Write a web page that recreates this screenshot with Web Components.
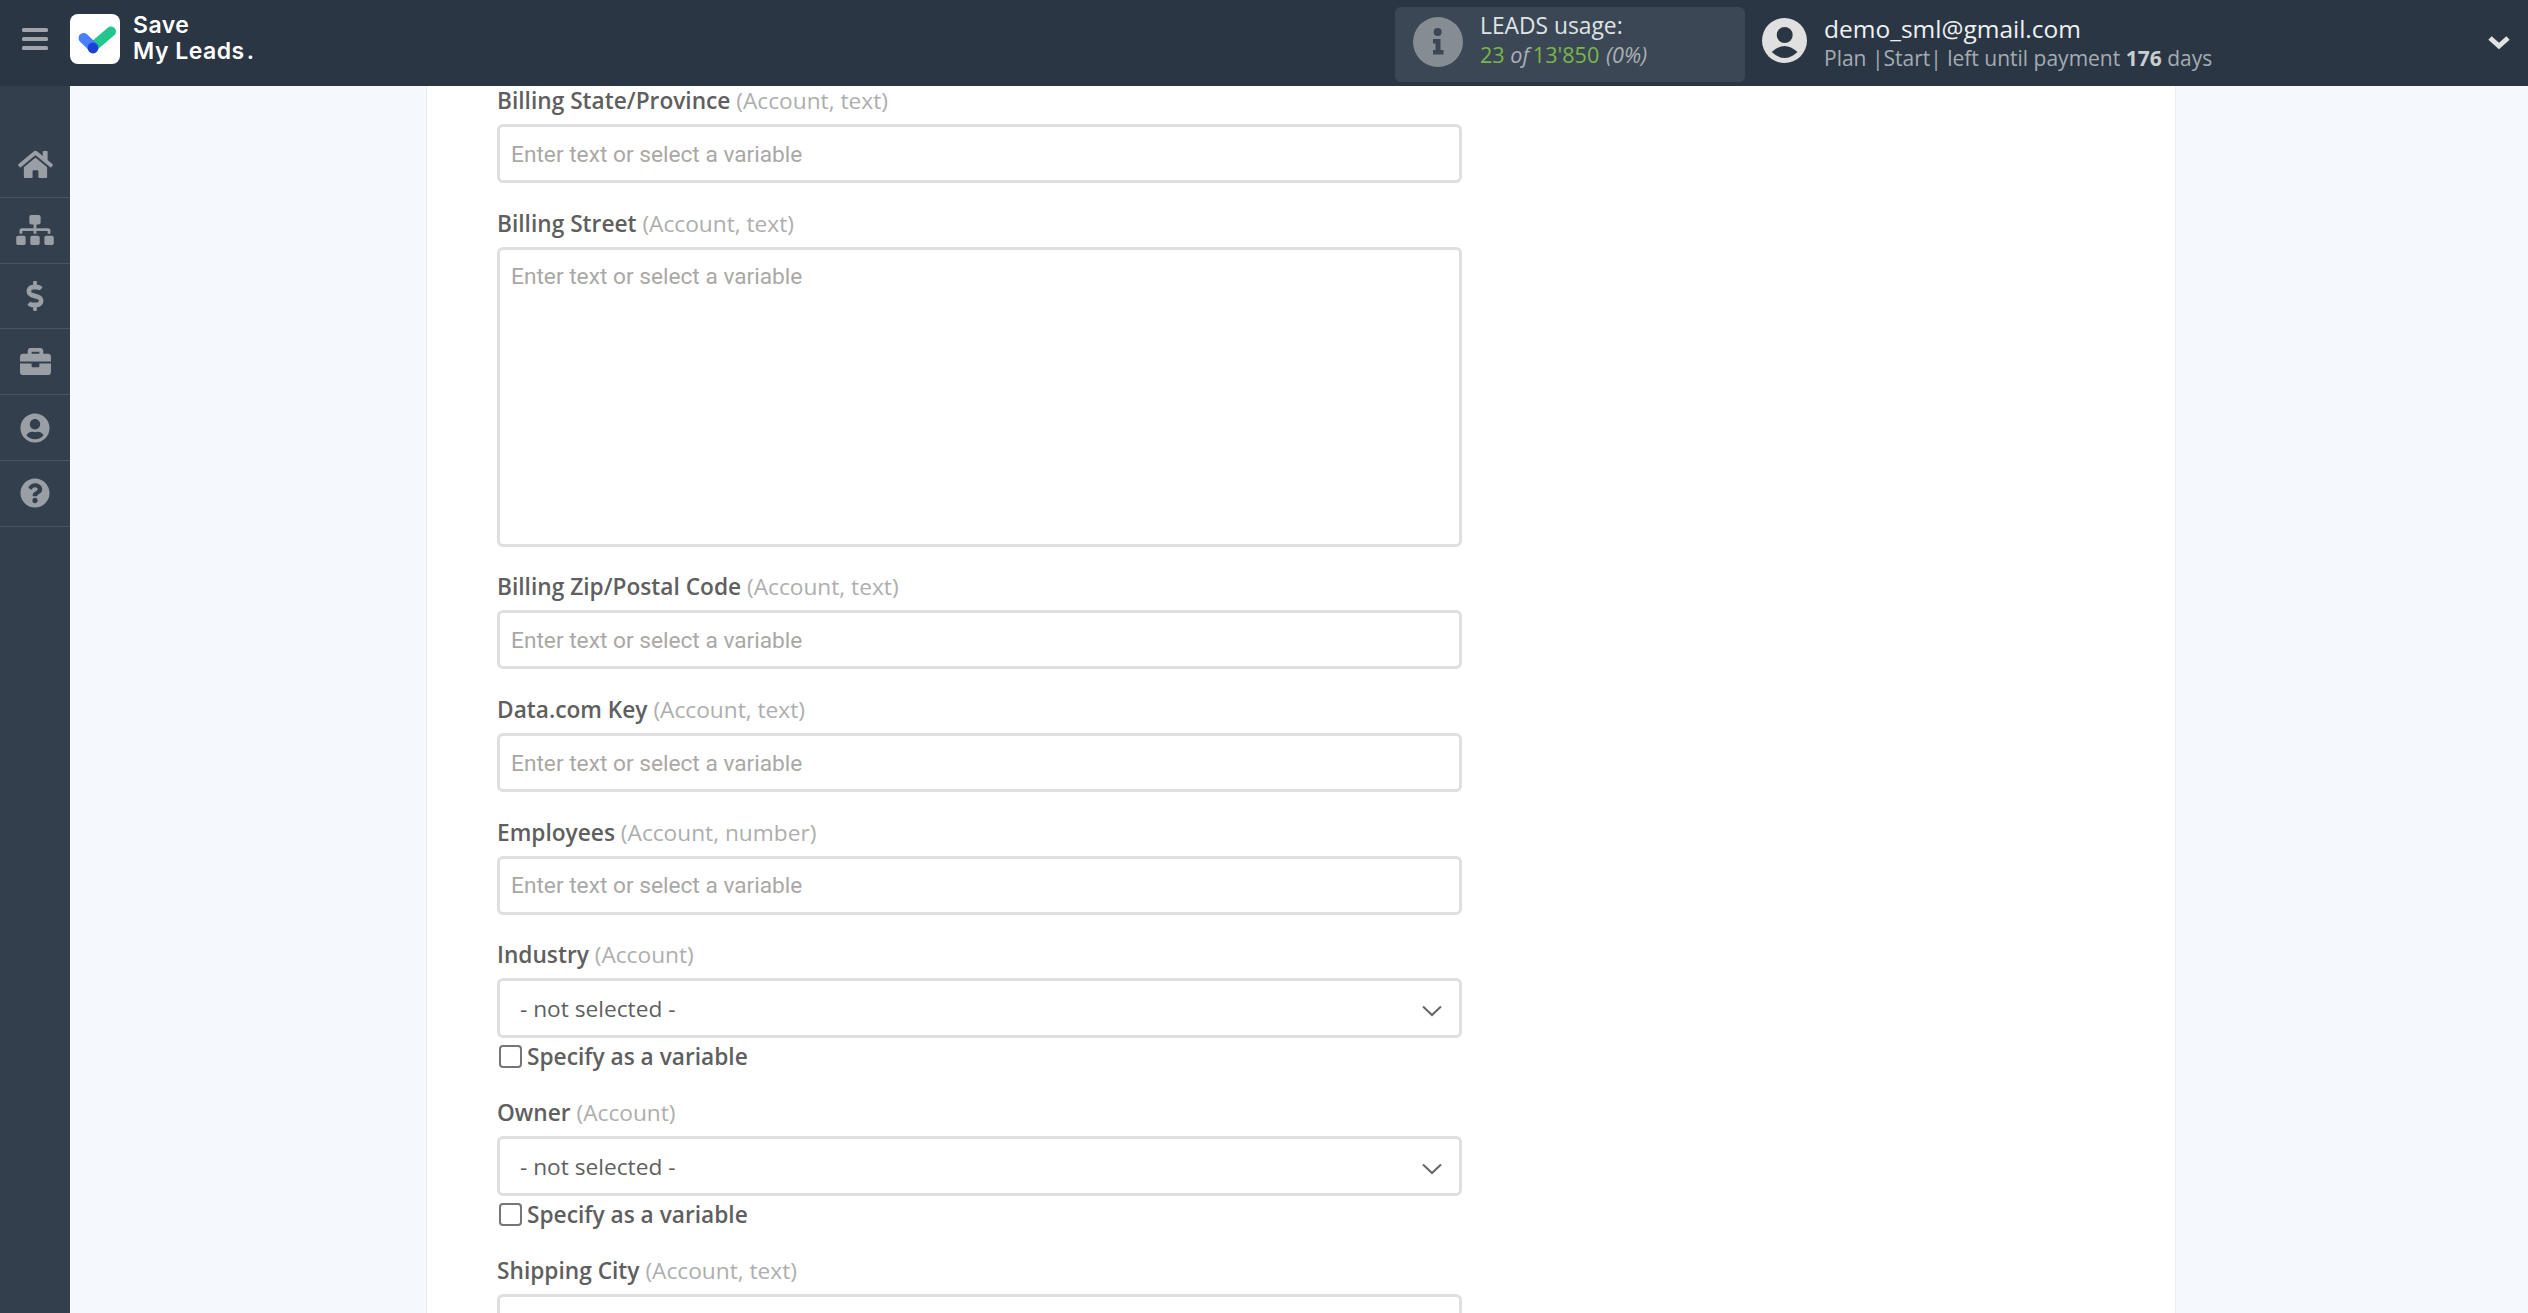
<!DOCTYPE html>
<html lang="en">
<head>
<meta charset="utf-8">
<title>Save My Leads</title>
<style>
  html, body { margin: 0; height: 100%; overflow: hidden; background: #f5f8fd; }
  body { display: flex; flex-direction: column; height: 1313px; font-family: "Open Sans", sans-serif; }
  .below { flex: 1; display: flex; min-height: 0; }
</style>
</head>
<body>
<sml-topbar></sml-topbar>
<div class="below">
  <sml-sidebar></sml-sidebar>
  <sml-content>
    <sml-field label="Billing State/Province" hint="(Account, text)"></sml-field>
    <sml-field label="Billing Street" hint="(Account, text)" type="area"></sml-field>
    <sml-field label="Billing Zip/Postal Code" hint="(Account, text)"></sml-field>
    <sml-field label="Data.com Key" hint="(Account, text)"></sml-field>
    <sml-field label="Employees" hint="(Account, number)"></sml-field>
    <sml-field label="Industry" hint="(Account)" type="select"></sml-field>
    <sml-field label="Owner" hint="(Account)" type="select"></sml-field>
    <sml-field label="Shipping City" hint="(Account, text)"></sml-field>
  </sml-content>
</div>

<template id="topbarTemplate">
  <style>
    :host { display: flex; align-items: center; height: 86px; flex: none; background: #2b3644; color: #fff; position: relative; z-index: 2; }
    #burger { width: 70px; display: flex; justify-content: center; margin-top: -7px; }
    #logo { width: 50px; height: 50px; flex: none; margin-top: -8px; }
    #brand { margin: -10px 0 0 13px; font: 600 23px/26px "Inter", sans-serif; letter-spacing: .5px; color: #fff; }
    #dot { margin-left: 2px; }
    #right { margin-left: auto; display: flex; align-items: center; }
    #chev { width: 24px; margin: -2px 17px 0 0; display: flex; }
  </style>
  <div id="burger">
    <svg width="28" height="24" viewBox="0 0 28 24"><g fill="#a0a5ab"><rect x="1" y="0" width="26" height="4" rx="1.5"/><rect x="1" y="9" width="26" height="4" rx="1.5"/><rect x="1" y="18" width="26" height="4" rx="1.5"/></g></svg>
  </div>
  <svg id="logo" viewBox="0 0 50 50">
    <rect width="50" height="50" rx="8" fill="#fff"/>
    <path d="M24 32 L41 17.5" stroke="#23c78d" stroke-width="10" stroke-linecap="round" fill="none"/>
    <path d="M13.5 24 L23 33" stroke="#4a7ffb" stroke-width="10" stroke-linecap="round" fill="none"/>
    <circle cx="23" cy="34" r="5.4" fill="#1c3fd6"/>
  </svg>
  <div id="brand">Save<br>My Leads<span id="dot">.</span></div>
  <div id="right">
    <sml-usage></sml-usage>
    <sml-user></sml-user>
    <div id="chev"><svg width="24" height="16" viewBox="0 0 24 16"><path d="M3 4 L12 12 L21 4" fill="none" stroke="#e2e2e2" stroke-width="5" stroke-linejoin="miter"/></svg></div>
  </div>
</template>

<template id="usageTemplate">
  <style>
    :host { display: flex; align-items: center; width: 350px; height: 75px; box-sizing: border-box; padding-left: 18px; margin: 3px 17px 0 0; background: #3b4754; border-radius: 6px; font-family: "Open Sans", sans-serif; }
    svg { width: 50px; height: 50px; flex: none; margin-top: -5px; }
    #text { margin: -10px 0 0 17px; font-size: 22.8px; line-height: 29px; color: #dfe3e6; }
    #line { font-size: 21.6px; }
    b { font-weight: 400; color: #7ab648; }
    #total { margin-left: -2px; margin-right: 1px; }
    i { color: #a9b0b5; }
  </style>
  <svg viewBox="0 0 50 50">
    <circle cx="25" cy="25" r="25" fill="#868d92"/>
    <g fill="#3b4754"><circle cx="24.6" cy="15" r="4"/><path d="M20 22h7.5v11h3v4.5H20V33h2.5v-6.500H20z"/></g>
  </svg>
  <div id="text">
    <div>LEADS usage:</div>
    <div id="line"><b>23</b> <i>of</i> <b id="total">13'850</b> <i>(0%)</i></div>
  </div>
</template>

<template id="userTemplate">
  <style>
    :host { display: flex; align-items: center; font-family: "Open Sans", sans-serif; width: 725px; }
    svg { width: 45px; height: 45px; flex: none; margin-top: -5px; }
    #text { margin-left: 17px; }
    #mail { font-size: 24.5px; line-height: 30px; color: #eef0f2; }
    #plan { font-size: 21px; line-height: 28px; color: #a4acb3; }
    b { font-weight: 700; color: #c9ced2; }
  </style>
  <svg viewBox="0 0 45 45">
    <circle cx="22.500" cy="22.500" r="22.500" fill="#e0e0e0"/>
    <circle cx="22.700" cy="17" r="8" fill="#2b3644"/>
    <path d="M9.700 34 Q22.500 22 35.500 34 Q22.500 46 9.700 34 Z" fill="#2b3644"/>
  </svg>
  <div id="text">
    <div id="mail">demo_sml@gmail.com</div>
    <div id="plan">Plan |Start| left until payment <b>176</b> days</div>
  </div>
</template>

<template id="sidebarTemplate">
  <style>
    :host { display: block; width: 70px; flex: none; background: #343f4d; padding-top: 46px; box-sizing: border-box; }
    .item { height: 65.8px; border-bottom: 1px solid #4a5460; box-sizing: border-box; display: flex; align-items: center; justify-content: center; }
    svg { fill: #9a9fa6; display: block; }
  </style>
  <div class="item"><svg width="35" height="31" viewBox="0 0 576 512"><path d="M280.37 148.26L96 300.11V464a16 16 0 0 0 16 16l112.06-.29a16 16 0 0 0 15.92-16V368a16 16 0 0 1 16-16h64a16 16 0 0 1 16 16v95.64a16 16 0 0 0 16 16.05L464 480a16 16 0 0 0 16-16V300L295.67 148.26a12.19 12.19 0 0 0-15.3 0zM571.6 251.47L488 182.56V44.05a12 12 0 0 0-12-12h-56a12 12 0 0 0-12 12v72.61L318.47 43a48 48 0 0 0-61 0L4.34 251.47a12 12 0 0 0-1.6 16.9l25.5 31A12 12 0 0 0 45.15 301l235.22-193.74a12.19 12.19 0 0 1 15.3 0L530.9 301a12 12 0 0 0 16.9-1.6l25.5-31a12 12 0 0 0-1.7-16.93z"/></svg></div>
  <div class="item"><svg width="38" height="30" viewBox="0 0 640 512"><path d="M128 352H32c-17.67 0-32 14.33-32 32v96c0 17.67 14.33 32 32 32h96c17.67 0 32-14.33 32-32v-96c0-17.67-14.33-32-32-32zm-24-80h192v48h48v-48h192v48h48v-57.59c0-21.17-17.23-38.41-38.41-38.41H344v-64h40c17.67 0 32-14.33 32-32V32c0-17.67-14.33-32-32-32H256c-17.67 0-32 14.33-32 32v96c0 17.67 14.33 32 32 32h40v64H94.41C73.23 224 56 241.23 56 262.41V320h48v-48zm264 80h-96c-17.67 0-32 14.33-32 32v96c0 17.67 14.33 32 32 32h96c17.67 0 32-14.33 32-32v-96c0-17.67-14.33-32-32-32zm240 0h-96c-17.67 0-32 14.33-32 32v96c0 17.67 14.33 32 32 32h96c17.67 0 32-14.33 32-32v-96c0-17.67-14.33-32-32-32z"/></svg></div>
  <div class="item"><svg width="18" height="30" viewBox="0 0 288 512"><path d="M209.2 233.4l-108-31.6C88.7 198.2 80 186.5 80 173.5c0-16.3 13.2-29.5 29.5-29.5h66.3c12.2 0 24.2 3.7 34.2 10.5 6.1 4.1 14.3 3.1 19.5-2l34.8-34c7.1-6.9 6.1-18.4-1.8-24.5C238 74.8 207.4 64.1 176 64V16c0-8.8-7.2-16-16-16h-32c-8.8 0-16 7.2-16 16v48h-2.5C45.8 64-5.4 118.7.5 183.6c4.2 46.1 39.4 83.6 83.8 96.6l102.5 30c12.5 3.7 21.2 15.3 21.2 28.3 0 16.3-13.2 29.5-29.5 29.5h-66.3C100 368 88 364.3 78 357.5c-6.1-4.1-14.3-3.1-19.5 2l-34.8 34c-7.1 6.9-6.1 18.4 1.8 24.5 24.5 19.2 55.1 29.9 86.5 30v48c0 8.8 7.2 16 16 16h32c8.8 0 16-7.2 16-16v-48.2c46.6-.9 90.3-28.6 105.7-72.7 21.5-61.6-14.6-124.8-72.5-141.7z"/></svg></div>
  <div class="item"><svg width="31" height="31" viewBox="0 0 512 512"><path d="M320 336c0 8.84-7.16 16-16 16h-96c-8.84 0-16-7.16-16-16v-48H0v144c0 25.6 22.4 48 48 48h416c25.6 0 48-22.4 48-48V288H320v48zm144-208h-80V80c0-25.6-22.4-48-48-48H176c-25.6 0-48 22.4-48 48v48H48c-25.6 0-48 22.4-48 48v80h512v-80c0-25.6-22.4-48-48-48zm-144 0H192V96h128v32z"/></svg></div>
  <div class="item"><svg width="30" height="30" viewBox="0 0 496 512"><path d="M248 8C111 8 0 119 0 256s111 248 248 248 248-111 248-248S385 8 248 8zm0 96c48.6 0 88 39.4 88 88s-39.4 88-88 88-88-39.4-88-88 39.4-88 88-88zm0 344c-58.7 0-111.3-26.6-146.5-68.2 18.8-35.4 55.6-59.8 98.5-59.8 2.4 0 4.8.4 7.1 1.1 13 4.2 26.6 6.9 40.9 6.9 14.3 0 28-2.7 40.9-6.9 2.3-.7 4.7-1.1 7.1-1.1 42.9 0 79.7 24.4 98.5 59.8C359.3 421.4 306.7 448 248 448z"/></svg></div>
  <div class="item"><svg width="30" height="30" viewBox="0 0 512 512"><path d="M504 256c0 136.997-111.043 248-248 248S8 392.997 8 256C8 119.083 119.043 8 256 8s248 111.083 248 248zM262.655 90c-54.497 0-89.255 22.957-116.549 63.758-3.536 5.286-2.353 12.415 2.715 16.258l34.699 26.31c5.205 3.947 12.621 3.008 16.665-2.122 17.864-22.658 30.113-35.797 57.303-35.797 20.429 0 45.698 13.148 45.698 32.958 0 14.976-12.363 22.667-32.534 33.976C247.128 238.528 216 254.941 216 296v4c0 6.627 5.373 12 12 12h56c6.627 0 12-5.373 12-12v-1.333c0-28.462 83.186-29.647 83.186-106.667 0-58.002-60.165-102-116.531-102zM256 338c-25.365 0-46 20.635-46 46 0 25.364 20.635 46 46 46s46-20.636 46-46c0-25.365-20.635-46-46-46z"/></svg></div>
</template>

<template id="contentTemplate">
  <style>
    :host { display: block; flex: 1; min-width: 0; overflow: hidden; padding-left: 356px; padding-right: 352px; }
    #card { background: #fff; height: 100%; box-sizing: border-box; border-left: 1px solid #e9edf2; border-right: 1px solid #e9edf2; padding: 1px 0 0 70px; overflow: hidden; }
    #form { width: 965px; display: flex; flex-direction: column; }
  </style>
  <div id="card"><div id="form"><slot></slot></div></div>
</template>

<template id="fieldTemplate">
  <style>
    :host { display: block; font-family: "Open Sans", sans-serif; margin-bottom: 26.7px; }
    label { display: block; font-size: 22.7px; line-height: 28px; font-weight: 600; color: #5f5f5f; margin-bottom: 9px; }
    span { font-weight: 400; color: #aeaeae; }
    #box { box-sizing: border-box; width: 100%; height: 59px; border: 3px solid #dfdfdf; border-radius: 6px; background: #fff; display: flex; align-items: center; padding: 1px 11px 0; font: 22.7px "Roboto", sans-serif; color: #aaa8a6; }
    :host([type=area]) #box { height: 300px; align-items: flex-start; padding-top: 13px; }
    :host([type=select]) #box { height: 60px; font: 22.7px "Open Sans", sans-serif; color: #5f5f5f; padding: 0 17px 0 20px; justify-content: space-between; }
    svg { display: block; margin-top: 6px; }
    #var { display: flex; align-items: center; height: 31.5px; margin-top: 2.5px; font-size: 22.7px; font-weight: 600; color: #5f5f5f; }
    #check { box-sizing: border-box; width: 23px; height: 23px; border: 2px solid #767676; border-radius: 4px; background: #fff; margin: 0 5px 0 2px; }
  </style>
  <label></label>
  <div id="box"></div>
</template>
<script>
  function tpl(id) {
    return document.getElementById(id).content.cloneNode(true);
  }

  function simple(tag, id) {
    customElements.define(tag, class extends HTMLElement {
      constructor() {
        super();
        this.attachShadow({mode: "open"}).appendChild(tpl(id));
      }
    });
  }

  simple("sml-topbar", "topbarTemplate");
  simple("sml-usage", "usageTemplate");
  simple("sml-user", "userTemplate");
  simple("sml-sidebar", "sidebarTemplate");
  simple("sml-content", "contentTemplate");

  customElements.define("sml-field", class extends HTMLElement {
    constructor() {
      super();
      this.root = this.attachShadow({mode: "open"});
      this.root.appendChild(tpl("fieldTemplate"));
    }
    connectedCallback() {
      let label = this.root.querySelector("label");
      label.textContent = this.getAttribute("label") + " ";
      let hint = document.createElement("span");
      hint.textContent = this.getAttribute("hint");
      label.appendChild(hint);

      let box = this.root.querySelector("#box");
      if(this.getAttribute("type") === "select") {
        box.innerHTML = '<div>- not selected -</div><svg width="20" height="12" viewBox="0 0 20 12"><path d="M1 1.5 L10 10 L19 1.5" fill="none" stroke="#666" stroke-width="2"/></svg>';
        let row = document.createElement("div");
        row.id = "var";
        row.innerHTML = '<div id="check"></div><div>Specify as a variable</div>';
        this.root.appendChild(row);
      }
      else {
        box.textContent = "Enter text or select a variable";
      }
    }
  });
</script>
</body>
</html>
